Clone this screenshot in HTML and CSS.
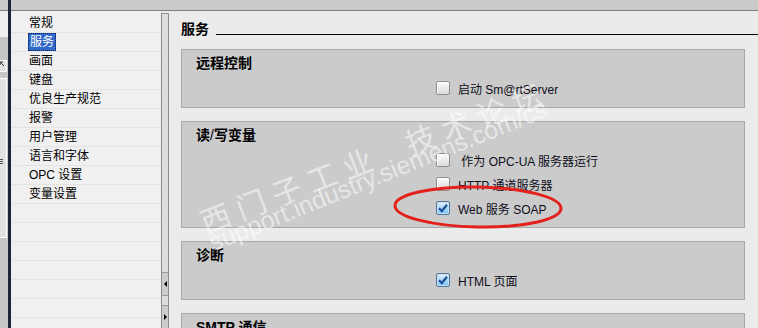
FILE: index.html
```html
<!DOCTYPE html>
<html>
<head>
    <title>Runtime settings - Services</title>
    <link rel="stylesheet" href="styles.css">
</head>
<body>
<div class="app">
    <div class="side_strip">
        <div class="strip_top"></div>
        <div class="strip_light"></div>
        <div class="strip_body">
            <div class="strip_btn">
                <svg width="6" height="10" viewBox="0 0 6 10"><path d="M0 1 L4 5 M0 1 L3 1 M0 1 L0 4" stroke="#333" stroke-width="1" fill="none"/></svg>
            </div>
            <div class="strip_box"><span class="strip_lines"></span></div>
        </div>
    </div>
    <div class="divider"></div>

    <div class="workspace">
        <div class="topbar"></div>
        <div class="panes">
            <!-- settings tree -->
            <ul class="nav">
                <li>常规</li>
                <li><span class="selected">服务</span></li>
                <li>画面</li>
                <li>键盘</li>
                <li>优良生产规范</li>
                <li>报警</li>
                <li>用户管理</li>
                <li>语言和字体</li>
                <li>OPC 设置</li>
                <li>变量设置</li>
                <li></li><li></li><li></li><li></li><li></li><li></li>
            </ul>

            <div class="splitter">
                <div class="split_track"></div>
                <div class="split_btn"><span class="arrow_left"></span></div>
                <div class="split_gap"></div>
                <div class="split_btn"><span class="arrow_right"></span></div>
            </div>

            <!-- settings page -->
            <div class="settings">
                <div class="page_title">
                    <h2>服务</h2>
                    <span class="rule"></span>
                </div>

                <section class="group">
                    <h3>远程控制</h3>
                    <div class="options">
                        <label class="opt"><span class="cb"></span>启动 Sm@rtServer</label>
                    </div>
                </section>

                <section class="group">
                    <h3>读<span class="slash">/</span>写变量</h3>
                    <div class="options">
                        <label class="opt"><span class="cb"></span>&nbsp;作为 OPC-UA 服务器运行</label>
                        <label class="opt"><span class="cb"></span>HTTP 通道服务器</label>
                        <label class="opt"><span class="cb checked"><svg width="12" height="12" viewBox="0 0 12 12"><path d="M2 6.2 L4.8 9 L10 2.8" stroke="#1b4f9c" stroke-width="2.2" fill="none"/></svg></span>Web 服务 SOAP</label>
                    </div>
                </section>

                <section class="group">
                    <h3>诊断</h3>
                    <div class="options">
                        <label class="opt"><span class="cb checked"><svg width="12" height="12" viewBox="0 0 12 12"><path d="M2 6.2 L4.8 9 L10 2.8" stroke="#1b4f9c" stroke-width="2.2" fill="none"/></svg></span>HTML 页面</label>
                    </div>
                </section>

                <section class="group group_last">
                    <h3>SMTP 通信</h3>
                </section>
            </div>
        </div>
    </div>

    <div class="watermark wm_cn">西门子工业&nbsp;&nbsp;技术论坛</div>
    <div class="watermark wm_url">support.industry.siemens.com/cs</div>
    <svg class="red_mark" width="758" height="328" viewBox="0 0 758 328">
        <ellipse cx="478" cy="207" rx="83" ry="20" transform="rotate(1 478 207)" fill="none" stroke="#e3201b" stroke-width="3"/>
    </svg>
</div>
</body>
</html>
```

FILE: styles.css
```css
body {
	margin:0;
	font-family:"Liberation Sans", "Noto Sans CJK SC", sans-serif;
	font-size:12px;
	color:#000000;
}

.app {
	position:relative;
	display:flex;
	width:758px;
	height:328px;
	overflow:hidden;
	background-color:#ebebeb;
}

/* left edge of the neighbouring panel */
.side_strip {
	display:flex;
	flex-direction:column;
	width:8px;
}

.strip_top {
	height:10px;
	background-color:#cbcbcb;
	border-bottom:1px solid #808080;
}

.strip_light {
	height:26px;
	background-color:#efefef;
}

.strip_body {
	flex:1;
	background-color:#c6c6c6;
	padding-top:23px;
}

.strip_btn {
	width:6px;
	height:10px;
	border:1px solid #ffffff;
	border-left:none;
	background-color:#e2e2e2;
}

.strip_btn svg {
	display:block;
}

.strip_box {
	width:6px;
	height:158px;
	margin-top:6px;
	border:1px solid #ffffff;
	border-left:none;
	background-color:#e2e2e2;
}

.strip_lines {
	display:block;
	width:3px;
	height:1px;
	margin-top:80px;
	background-color:#555555;
	box-shadow:0 2px 0 #555555, 0 4px 0 #555555;
}

.divider {
	width:3px;
	background-color:#1f2534;
}

.workspace {
	flex:1;
	display:flex;
	flex-direction:column;
}

.topbar {
	height:10px;
	background-color:#cbcbcb;
	border-bottom:1px solid #808080;
}

.panes {
	flex:1;
	display:flex;
	min-height:0;
}

/* settings tree */
.nav {
	width:150px;
	margin:0;
	padding:3px 0 0 0;
	list-style:none;
	background-color:#f0f0f0;
}

.nav li {
	height:18px;
	line-height:18px;
	padding-left:18px;
	border-bottom:1px solid #e4e4e4;
	white-space:nowrap;
}

.nav .selected {
	display:inline-block;
	height:18px;
	box-sizing:border-box;
	line-height:16px;
	margin-left:-1px;
	padding:0 1px;
	border:1px dotted #0b1f60;
	background-color:#3169c9;
	color:#ffffff;
	vertical-align:top;
}

.splitter {
	display:flex;
	flex-direction:column;
	width:6px;
	margin-top:2px;
	border:1px solid #8c8c8c;
	border-bottom:none;
	background-color:#dedede;
}

.split_track {
	flex:1;
}

.split_btn {
	display:flex;
	align-items:center;
	height:22px;
	border-top:1px solid #9a9a9a;
	background-color:#cdcdcd;
}

.split_gap {
	height:9px;
	border-top:1px solid #9a9a9a;
}

.arrow_left {
	width:0;
	height:0;
	margin-left:2px;
	border-top:3px solid transparent;
	border-bottom:3px solid transparent;
	border-right:3px solid #000000;
}

.arrow_right {
	width:0;
	height:0;
	margin-left:2px;
	border-top:3px solid transparent;
	border-bottom:3px solid transparent;
	border-left:3px solid #000000;
}

/* settings page */
.settings {
	flex:1;
	padding:10px 13px 0 12px;
	background-color:#ebebeb;
}

.page_title {
	display:flex;
	align-items:flex-start;
	height:16px;
	margin-bottom:12px;
}

.page_title h2 {
	margin:0;
	font-size:14px;
	line-height:16px;
	font-weight:bold;
}

.rule {
	flex:1;
	height:13px;
	margin-left:7px;
	margin-right:-13px;
	border-bottom:1px solid #000000;
}

.group {
	padding:5px 0 7px 14px;
	margin-bottom:13px;
	border:1px solid #a9a9a9;
	background-color:#cbcbcb;
}

.group_last {
	height:30px;
}

.group h3 {
	margin:0 0 5px 0;
	font-size:14px;
	line-height:16px;
	font-weight:bold;
}

.slash {
	font-weight:normal;
}

.options {
	margin-left:240px;
}

.opt {
	display:flex;
	align-items:center;
	gap:8px;
	height:24px;
	color:#0e0e1a;
	white-space:nowrap;
}

.cb {
	display:flex;
	align-items:center;
	justify-content:center;
	width:14px;
	height:14px;
	box-sizing:border-box;
	border:1px solid #8e8e8e;
	border-radius:2px;
	background:linear-gradient(#fbfbfb, #dadada);
	box-shadow:inset 1px 1px 0 #ffffff;
}

.cb.checked {
	border-color:#5b7896;
	background:linear-gradient(#e4f2fc, #7fc3f0);
	box-shadow:inset 0 0 0 1px #bfe0f7;
}

.cb svg {
	display:block;
}

/* overlays on the screenshot */
.watermark {
	position:absolute;
	white-space:nowrap;
	color:rgba(255, 255, 255, 0.55);
	transform-origin:0 50%;
	pointer-events:none;
}

.wm_cn {
	left:201px;
	top:202px;
	height:40px;
	line-height:40px;
	font-family:"Noto Sans CJK SC", sans-serif;
	font-size:30px;
	letter-spacing:8px;
	transform:rotate(-21deg);
}

.wm_url {
	left:210px;
	top:228px;
	height:30px;
	line-height:30px;
	font-size:25px;
	transform:rotate(-22deg);
}

.red_mark {
	position:absolute;
	left:0;
	top:0;
	pointer-events:none;
}
```
